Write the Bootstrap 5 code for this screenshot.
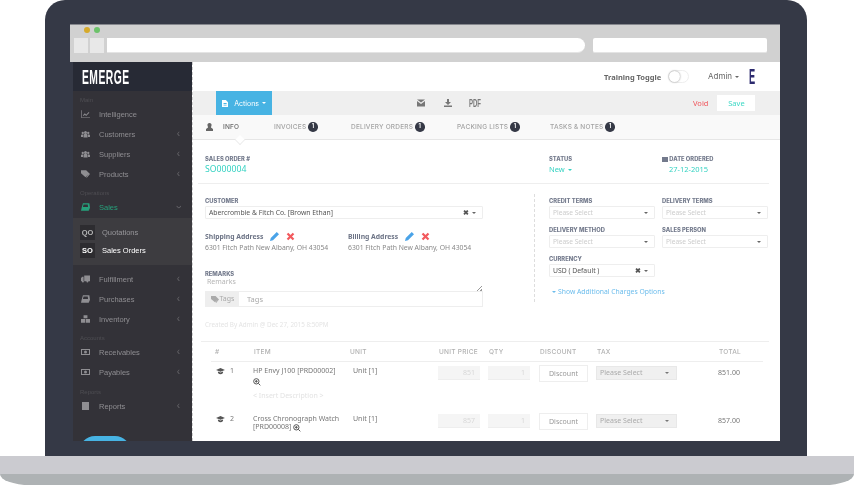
<!DOCTYPE html>
<html lang="en"><head><meta charset="utf-8"><title>Emerge</title>
<link href="https://cdn.jsdelivr.net/npm/bootstrap@5.3.0/dist/css/bootstrap.min.css" rel="stylesheet">
<style>
html,body{margin:0;width:854px;height:485px;overflow:hidden;background:#fff}
body{font-family:"Noto Sans",sans-serif;font-size:7px;line-height:1.2;color:#777}
.lid{width:762px;height:456px;margin:0 auto 0 45px;background:#353946;border-radius:20px 20px 0 0;padding:24px 27px 15px 25px}
.screen{height:417px;display:flex;flex-direction:column;overflow:hidden;filter:blur(.3px)}
.chrome{height:38px;background:#d1d1d1;border-top:1px solid #85878d;padding:2px 0 0 14px;flex:none}
.dot{width:6px;height:6px;border-radius:50%}
.dots{gap:4px;height:11px}
.nav-sq{width:14px;height:15px;background:#e8e8e8}
.addr{height:15px;background:#fff;border-radius:0 8px 8px 0;width:478px;border-bottom:1px solid #e4e4e4}
.addr2{height:15px;background:#fff;border-radius:2px;width:174px;border-bottom:1px solid #e4e4e4}
.navrow{margin-left:-10px}
.appwrap{height:379px;display:flex;padding-left:3px;flex:none}
.side{width:119px;background:#333238;flex:none;font-family:"Liberation Sans",sans-serif;font-size:7.5px;color:#8f8e92;height:379px;overflow:hidden;position:relative}
.brand{height:29px;background:#272a35;padding-left:9px;display:flex;align-items:center}
.brand span{display:block;color:#fff;font:700 21px/1 "Liberation Sans",sans-serif;letter-spacing:1px;transform:scaleX(.49);transform-origin:left center}
.sec{height:13px;display:flex;align-items:flex-end;padding:0 0 0 7px;font-size:6px;color:#4f4e53;line-height:8px}
.it{height:20px;display:flex;align-items:center;padding:0 12px 0 8px}
.it svg.ic{width:9px;height:8px;margin-right:9px;flex:none;fill:#8f8e92}
.it .chev{margin-left:auto;font-size:10px;color:#66656a;line-height:1}
.it.act,.it.act svg{color:#26a17b;fill:#26a17b}
.sub{height:47px;margin:1px 0 4px;background:#3d3c40;padding:5px 0 0 7px}
.subit{height:18px;display:flex;align-items:center;color:#98979b}
.subit b{width:15px;height:15px;background:#2d2c30;margin-right:7px;display:flex;align-items:center;justify-content:center;font:700 7.5px "Liberation Sans",sans-serif;color:#b5b5b5}
.subit.on,.subit.on b{color:#fff}
.pill{position:absolute;left:6px;bottom:-11px;width:52px;height:16px;background:#47b3e3;border-radius:26px 26px 0 0}
.main{flex:1;background:#fff;border-left:1px dashed #cfcfcf;display:flex;flex-direction:column;min-width:0;height:379px;overflow:hidden}
.top{height:29px;flex:none;display:flex;align-items:center;padding-left:411px}
.tt{font:700 7.5px "Noto Sans",sans-serif;color:#666;width:64px}
.tog{width:21px;height:13px;border:1px solid #eee;border-radius:7px;margin-right:19px;position:relative;background:#fff}
.tog i{position:absolute;left:0;top:0;width:11px;height:11px;border-radius:50%;background:#fff;box-shadow:0 0 2px #888}
.adm{width:41px;font-size:8px;color:#666;font-family:"Inter",sans-serif}
.elogo{display:block;width:7px;font:700 22px/1 "Liberation Sans",sans-serif;color:#2c2a6e;transform:scaleX(.42);transform-origin:left center}
.care{display:inline-block;border-left:2.5px solid transparent;border-right:2.5px solid transparent;border-top:2.5px solid currentColor;vertical-align:middle;margin-left:3px}
.tool{height:24px;background:#efefef;flex:none;display:flex;align-items:center;position:relative}
.act-btn{margin-left:23px;width:56px;height:24px;background:#47b3e3;color:#fff;display:flex;align-items:center;padding-left:6px;font:7px "Inter",sans-serif;border-radius:0;border:0}
.act-btn svg{width:8px;height:9px;fill:#fff;margin-right:6px}
.tico{width:8px;height:8px;fill:#777;flex:none}
.pdf{display:block;width:11px;font:700 10px "Liberation Sans",sans-serif;color:#777;transform:scaleX(.6);transform-origin:left center}
.void{color:#f0555b;font:7.5px "Noto Sans",sans-serif;margin-left:213px;margin-right:9px}
.save{width:38px;height:16px;background:#fff;border:0;border-radius:0;color:#3fd9c6;font:7.5px "Noto Sans",sans-serif;padding:0}
.tabs{height:25px;flex:none;background:#f9f9f9;border-bottom:1px solid #e6e6e6;display:flex;align-items:center;padding-left:13px;font:500 6.5px "Inter",sans-serif;letter-spacing:.2px;color:#a3a3a3;position:relative}
.tabs span.t{display:flex;align-items:center}
.tabs .badge{width:9.5px;height:9.5px;border-radius:50%;background:#353946;color:#fff;font-size:5.5px;padding:0;margin-left:2px;display:flex;align-items:center;justify-content:center}
.notch{position:absolute;left:42px;bottom:-6px;width:10px;height:10px;background:#fff;border-right:1px solid #e6e6e6;border-bottom:1px solid #e6e6e6;transform:rotate(45deg) scale(.7)}
.lab{font:800 5.8px/7px "Inter",sans-serif;color:#737a8c}
.teal{color:#35d2c2}
.head{height:44px;flex:none;margin-left:5px;width:571px;border-bottom:1px solid #eee;display:flex;padding:15px 0 0 7px}
.frm{display:flex;flex:none;height:157px;padding-left:12px}
.lf{width:278px;flex:none;padding-top:13px}
.rt{margin-left:51px;border-left:1px dashed #ddd;width:235px;padding:1px 0 0 14px;height:108px;margin-top:10px;flex:none}
.sel{height:13px;border:1px solid #eee;display:flex;align-items:center;justify-content:space-between;padding:0 6px 0 3px;font:6.6px "Noto Sans",sans-serif;color:#ccc;margin-top:2px;border-radius:1px}
.sel .care{color:#666;margin:0}
.sel.dk{color:#555;font-size:6.8px}
.x{color:#555;font-size:7px;margin-right:3px;font-weight:700;line-height:1}
.g2{display:grid;grid-template-columns:106px 106px;column-gap:7px;row-gap:7px}
.addrb{font:700 6.8px/9px "Noto Sans",sans-serif;color:#6d7486;display:flex;align-items:center}
.addrb svg{width:9px;height:9px;margin-left:7px}
.addrt{font-size:6.8px;color:#888;margin-top:3px}
.addrs{display:flex;margin-top:13px;height:30px}
.addrs>div{width:143px;flex:none}
.tagi{display:flex;height:16px;border:1px solid #eee;margin-top:3px;align-items:center;color:#aaa}
.tagi .ad{width:33px;height:100%;background:#eee;display:flex;align-items:center;justify-content:center;gap:1px;color:#aaa;font-size:7px}
.tagi .ad svg{width:8px;height:7px;fill:#aaa}
.created{color:#e4e4e4;font-size:6.3px;margin-top:14px}
.rsz{position:absolute;right:1px;bottom:-3px;width:5px;height:5px;background:linear-gradient(135deg,transparent 50%,#999 50%,#999 60%,transparent 60%,transparent 75%,#999 75%)}
.lines{height:10px;position:relative;margin-top:1px;color:#b5b5b5;padding-left:2px}
.tblhr{height:1px;background:#eee;margin:0 11px 0 8px;flex:none}
.trow{display:flex;flex:none;padding-left:22px}
.th{height:20px;align-items:center;font:500 6.5px "Inter",sans-serif;letter-spacing:.25px;color:#b0b0b0;margin:0 17px 0 18px;padding:1px 0 0 4px;border-bottom:1px solid #eee}
.c1{width:39px;flex:none}.c2{width:96px;flex:none}.c3{width:89px;flex:none}.c4{width:50px;flex:none}.c5{width:51px;flex:none}.c6{width:57px;flex:none}.c7{width:81px;flex:none}.c8{width:63px;flex:none;text-align:right;padding-top:2px}
.tr{height:48px;padding-top:5px;font-size:7px;color:#777;padding-left:21px}
.dis{height:14px;width:42px;background:#f5f5f5;border-bottom:1px solid #eee;color:#d8d8d8;text-align:right;padding:3px 5px 0 0;margin-top:-1px}
.disb{height:17px;width:49px;border:1px solid #eee;text-align:center;color:#999;line-height:15px;margin-top:-2px}
.taxs{height:14px;width:81px;background:#f0f0f0;border:1px solid #e8e8e8;color:#aaa;display:flex;align-items:center;justify-content:space-between;padding:0 7px 0 3px;margin-top:-1px}
.taxs .care{color:#777;margin:0}
.zoomi{width:8px;height:8px;display:block;margin-top:3px}
.zoomi.in{display:inline-block;margin:0 0 -1px 2px}
.ins{color:#e3e3e3;margin-top:6px}
.c1 svg{width:9px;height:7px;margin:0 5px 0 2px}
.base{height:18px;background:#cbcbd0}
.base2{height:11px;background:#aeb2b4;border-radius:0 0 30px 30px / 0 0 11px 11px}
</style></head><body>
<svg width="0" height="0" class="position-absolute"><defs>
<symbol id="grp" viewBox="0 0 18 14"><circle cx="9" cy="4" r="3"/><circle cx="3.500" cy="5" r="2.300"/><circle cx="14.500" cy="5" r="2.300"/><path d="M5 14V9q0-2 2-2h4q2 0 2 2v5zM0 13V9.500q0-1.500 2-1.500h2v5zM18 13V9.500q0-1.500-2-1.500h-2v5z"/></symbol>
<symbol id="mny" viewBox="0 0 18 14"><path fill-rule="evenodd" d="M0 1h18v12H0zM2 3v8h14V3zM9 4a3 3 0 1 1 0 6 3 3 0 0 1 0-6z"/></symbol>
<symbol id="zm" viewBox="0 0 12 12"><path fill="none" stroke="#555" stroke-width="1.500" d="M5 1a4 4 0 1 1 0 8 4 4 0 0 1 0-8zM8 8l3 3M3 5h4M5 3v4"/></symbol>
<symbol id="eye" viewBox="0 0 14 11"><path fill="#555" d="M0 3l7-3 7 3-7 3zM3 5.500l4 1.700 4-1.700V8q-4 4-8 0z"/></symbol>
<symbol id="pen" viewBox="0 0 12 12"><path fill="#4aa3e8" d="M9 0l3 3-8 8-4 1 1-4z"/></symbol>
<symbol id="del" viewBox="0 0 12 12"><path stroke="#f25a5e" stroke-width="3" d="M2 2l8 8M10 2l-8 8"/></symbol>
</defs></svg>
<div class="lid"><div class="screen">
 <div class="chrome">
  <div class="d-flex dots"><div class="dot" style="background:#d6aa2b"></div><div class="dot" style="background:#6cc26a"></div></div>
  <div class="d-flex navrow"><div class="nav-sq me-0"></div><div class="nav-sq" style="margin-left:2px"></div><div class="addr" style="margin-left:3px"></div><div class="addr2" style="margin-left:8px"></div></div>
 </div>
 <div class="appwrap">
  <aside class="side">
   <div class="brand"><span>EMERGE</span></div>
   <div class="sec">Main</div>
   <div class="it"><svg class="ic" viewBox="0 0 14 12"><path d="M0 0h1v11h13v1H0zM3 8l3-3 2 2 4-4 1 1-5 5-2-2-2 2z"/></svg>Intelligence</div>
   <div class="it"><svg class="ic"><use href="#grp"/></svg>Customers<span class="chev">‹</span></div>
   <div class="it"><svg class="ic"><use href="#grp"/></svg>Suppliers<span class="chev">‹</span></div>
   <div class="it"><svg class="ic" viewBox="0 0 14 12"><path d="M0 0h6l6 6-5 5-7-6zM8 0l6 6-5 6-1-1 4-5-6-6z"/></svg>Products<span class="chev">‹</span></div>
   <div class="sec">Operations</div>
   <div class="it act"><svg class="ic" viewBox="0 0 14 12"><path d="M3 0h10l1 7-2 5H0l1-5zM4 2L3 6h8l-.5-4z"/></svg>Sales<span class="chev" style="transform:rotate(-90deg)">‹</span></div>
   <div class="sub">
    <div class="subit"><b>QO</b>Quotations</div>
    <div class="subit on"><b>SO</b>Sales Orders</div>
   </div>
   <div class="it"><svg class="ic" viewBox="0 0 14 11"><path d="M5 0h9v9H5zM0 4l2-2h2v7H0zM3 8a1.500 1.500 0 1 1 0 3 1.500 1.500 0 0 1 0-3zM10 8a1.500 1.500 0 1 1 0 3 1.500 1.500 0 0 1 0-3z"/></svg>Fulfillment<span class="chev">‹</span></div>
   <div class="it"><svg class="ic" viewBox="0 0 14 12"><path d="M3 0h10l1 7-2 5H0l1-5zM4 2L3 6h8l-.5-4z"/></svg>Purchases<span class="chev">‹</span></div>
   <div class="it"><svg class="ic" viewBox="0 0 14 12"><path d="M4 0h6v5H4zM0 6h6.500v6H0zM7.500 6H14v6H7.500z"/></svg>Inventory<span class="chev">‹</span></div>
   <div class="sec">Accounts</div>
   <div class="it"><svg class="ic"><use href="#mny"/></svg>Receivables<span class="chev">‹</span></div>
   <div class="it"><svg class="ic"><use href="#mny"/></svg>Payables<span class="chev">‹</span></div>
   <div class="sec" style="height:14px">Reports</div>
   <div class="it"><svg class="ic" viewBox="0 0 9 8"><path d="M1 0h7v8H1z"/></svg>Reports<span class="chev">‹</span></div>
   <div class="pill"></div>
  </aside>
  <main class="main">
   <div class="top"><span class="tt">Training Toggle</span><span class="tog"><i></i></span><span class="adm">Admin<i class="care"></i></span><span class="elogo">E</span></div>
   <div class="tool">
    <button class="act-btn"><svg viewBox="0 0 8 9"><path fill-rule="evenodd" d="M0 0h5l3 3v6H0zM2 4v1h4V4zM2 6v1h4V6z"/></svg>Actions<i class="care"></i></button>
    <svg class="tico" style="margin-left:145px" viewBox="0 0 8 7"><path d="M0 0h8L4 3zM0 1.500l4 3 4-3V7H0z"/></svg>
    <svg class="tico" style="margin-left:19px" viewBox="0 0 8 8"><path d="M3 0h2v3h2L4 6 1 3h2zM0 6.500h8V8H0z"/></svg>
    <span class="pdf" style="margin-left:17px">PDF</span>
    <span class="void">Void</span><button class="btn save">Save</button>
   </div>
   <div class="tabs">
    <svg width="7" height="8" viewBox="0 0 7 8" style="margin-right:10px"><path fill="#666" d="M3.500 0a2 2 0 0 1 2 2.500q-.5 1.500-.5 2l2 1.500v2H0V6l2-1.500q0-.5-.5-2A2 2 0 0 1 3.500 0z"/></svg>
    <span class="t" style="width:51px;color:#666">INFO</span>
    <span class="t" style="width:77px">INVOICES<span class="badge">1</span></span>
    <span class="t" style="width:106px">DELIVERY ORDERS<span class="badge">1</span></span>
    <span class="t" style="width:93px">PACKING LISTS<span class="badge">1</span></span>
    <span class="t">TASKS &amp; NOTES<span class="badge">1</span></span>
    <i class="notch"></i>
   </div>
   <div class="head">
    <div style="width:344px"><div class="lab">SALES ORDER #</div><div class="teal" style="font-size:8.700px;margin-top:2px">SO000004</div></div>
    <div style="width:113px"><div class="lab">STATUS</div><div class="teal" style="font-size:7.500px;margin-top:3px">New<i class="care"></i></div></div>
    <div><div class="lab"><svg width="6" height="6" viewBox="0 0 6 6" style="vertical-align:-.5px"><path fill="#737a8c" d="M0 1h6v5H0z"/></svg> DATE ORDERED</div><div class="teal" style="font-size:7.500px;margin:3px 0 0 7px">27-12-2015</div></div>
   </div>
   <div class="frm">
    <div class="lf">
     <div class="lab">CUSTOMER</div>
     <div class="sel dk"><span>Abercrombie &amp; Fitch Co. [Brown Ethan]</span><span><span class="x">✖</span><i class="care"></i></span></div>
     <div class="addrs">
      <div><div class="addrb">Shipping Address<svg><use href="#pen"/></svg><svg><use href="#del"/></svg></div><div class="addrt">6301 Fitch Path New Albany, OH 43054</div></div>
      <div><div class="addrb">Billing Address<svg><use href="#pen"/></svg><svg><use href="#del"/></svg></div><div class="addrt">6301 Fitch Path New Albany, OH 43054</div></div>
     </div>
     <div class="lab" style="margin-top:8px">REMARKS</div>
     <div class="lines">Remarks<i class="rsz"></i></div>
     <div class="tagi"><span class="ad"><svg viewBox="0 0 14 12"><path d="M0 0h6l6 6-5 5-7-6zM8 0l6 6-5 6-1-1 4-5-6-6z"/></svg>Tags</span><span class="ms-1 ps-1" style="font-size:7.500px">Tags</span></div>
     <div class="created">Created By Admin @ Dec 27, 2015 8:50PM</div>
    </div>
    <div class="rt">
     <div class="g2" style="padding-top:2px">
      <div><div class="lab">CREDIT TERMS</div><div class="sel"><span>Please Select</span><i class="care"></i></div></div>
      <div><div class="lab">DELIVERY TERMS</div><div class="sel"><span>Please Select</span><i class="care"></i></div></div>
      <div><div class="lab">DELIVERY METHOD</div><div class="sel"><span>Please Select</span><i class="care"></i></div></div>
      <div><div class="lab">SALES PERSON</div><div class="sel"><span>Please Select</span><i class="care"></i></div></div>
      <div><div class="lab">CURRENCY</div><div class="sel dk"><span>USD ( Default )</span><span><span class="x">✖</span><i class="care"></i></span></div></div>
     </div>
     <div style="color:#6bbcec;margin:11px 0 0 3px;font-size:6.800px"><i class="care" style="margin:0 2px 0 0"></i>Show Additional Charges Options</div>
    </div>
   </div>
   <div class="tblhr"></div>
   <div class="trow th"><span class="c1">#</span><span class="c2">ITEM</span><span class="c3">UNIT</span><span class="c4">UNIT PRICE</span><span class="c5">QTY</span><span class="c6">DISCOUNT</span><span class="c7">TAX</span><span class="c8" style="padding:0">TOTAL</span></div>
   <div class="trow tr"><div class="c1"><svg><use href="#eye"/></svg>1</div><div class="c2">HP Envy J100 [PRD00002]<svg class="zoomi"><use href="#zm"/></svg><div class="ins">&lt; Insert Description &gt;</div></div><div class="c3 ps-1">Unit [1]</div><div class="c4"><div class="dis">851</div></div><div class="c5"><div class="dis">1</div></div><div class="c6"><div class="disb">Discount</div></div><div class="c7"><div class="taxs">Please Select<i class="care"></i></div></div><div class="c8">851.00</div></div>
   <div class="trow tr"><div class="c1"><svg><use href="#eye"/></svg>2</div><div class="c2">Cross Chronograph Watch<br>[PRD00008]<svg class="zoomi in"><use href="#zm"/></svg></div><div class="c3 ps-1">Unit [1]</div><div class="c4"><div class="dis">857</div></div><div class="c5"><div class="dis">1</div></div><div class="c6"><div class="disb">Discount</div></div><div class="c7"><div class="taxs">Please Select<i class="care"></i></div></div><div class="c8">857.00</div></div>
  </main>
 </div>
</div></div>
<div class="base"></div><div class="base2"></div>
</body></html>
